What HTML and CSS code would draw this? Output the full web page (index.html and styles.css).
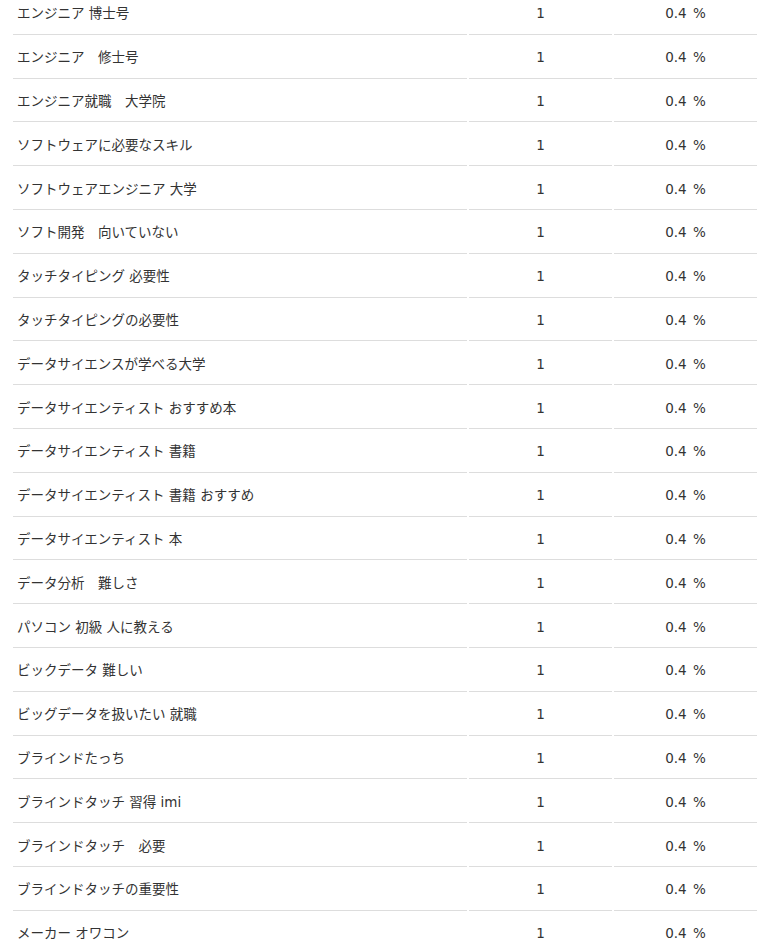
FILE: index.html
```html
<!DOCTYPE html>
<html lang="ja">
<head>
<meta charset="utf-8">
<link rel="stylesheet" href="styles.css">
</head>
<body>
<div class="wrap">
<table class="kw">
<colgroup><col class="c-kw"><col class="c-num"><col class="c-pct"></colgroup>
<tbody>
<tr><td>エンジニア 博士号</td><td class="num">1</td><td class="num">0.4 %</td></tr>
<tr><td>エンジニア　修士号</td><td class="num">1</td><td class="num">0.4 %</td></tr>
<tr><td>エンジニア就職　大学院</td><td class="num">1</td><td class="num">0.4 %</td></tr>
<tr><td>ソフトウェアに必要なスキル</td><td class="num">1</td><td class="num">0.4 %</td></tr>
<tr><td>ソフトウェアエンジニア 大学</td><td class="num">1</td><td class="num">0.4 %</td></tr>
<tr><td>ソフト開発　向いていない</td><td class="num">1</td><td class="num">0.4 %</td></tr>
<tr><td>タッチタイピング 必要性</td><td class="num">1</td><td class="num">0.4 %</td></tr>
<tr><td>タッチタイピングの必要性</td><td class="num">1</td><td class="num">0.4 %</td></tr>
<tr><td>データサイエンスが学べる大学</td><td class="num">1</td><td class="num">0.4 %</td></tr>
<tr><td>データサイエンティスト おすすめ本</td><td class="num">1</td><td class="num">0.4 %</td></tr>
<tr><td>データサイエンティスト 書籍</td><td class="num">1</td><td class="num">0.4 %</td></tr>
<tr><td>データサイエンティスト 書籍 おすすめ</td><td class="num">1</td><td class="num">0.4 %</td></tr>
<tr><td>データサイエンティスト 本</td><td class="num">1</td><td class="num">0.4 %</td></tr>
<tr><td>データ分析　難しさ</td><td class="num">1</td><td class="num">0.4 %</td></tr>
<tr><td>パソコン 初級 人に教える</td><td class="num">1</td><td class="num">0.4 %</td></tr>
<tr><td>ビックデータ 難しい</td><td class="num">1</td><td class="num">0.4 %</td></tr>
<tr><td>ビッグデータを扱いたい 就職</td><td class="num">1</td><td class="num">0.4 %</td></tr>
<tr><td>ブラインドたっち</td><td class="num">1</td><td class="num">0.4 %</td></tr>
<tr><td>ブラインドタッチ 習得 imi</td><td class="num">1</td><td class="num">0.4 %</td></tr>
<tr><td>ブラインドタッチ　必要</td><td class="num">1</td><td class="num">0.4 %</td></tr>
<tr><td>ブラインドタッチの重要性</td><td class="num">1</td><td class="num">0.4 %</td></tr>
<tr><td>メーカー オワコン</td><td class="num">1</td><td class="num">0.4 %</td></tr>
</tbody>
</table>
</div>
</body>
</html>
```

FILE: styles.css
```css
html, body {
  margin: 0;
  padding: 0;
  background: #fff;
}
body {
  font-family: "DejaVu Sans", "Noto Sans CJK JP", sans-serif;
  font-size: 13.5px;
  color: #333;
  overflow: hidden;
}
.wrap {
  padding-left: 11px;
  margin-top: -9px;
}
.kw {
  border-collapse: separate;
  border-spacing: 2px;
  width: 748px;
  table-layout: fixed;
}
.c-kw { width: 454px; }
.c-num { width: 143px; }
.c-pct { width: 143px; }
.kw td {
  height: 41.8px;
  box-sizing: border-box;
  padding: 0 4px;
  border-bottom: 1px solid #dddddd;
  vertical-align: middle;
  white-space: nowrap;
  line-height: 16px;
}
.kw td.num {
  text-align: center;
  word-spacing: 2px;
}
```
